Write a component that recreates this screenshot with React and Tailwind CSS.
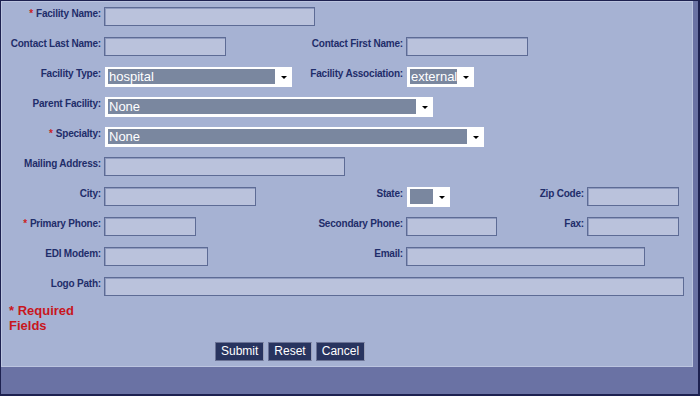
import React from "react";

const Label = ({ children, req }) => (
  <div className="pt-[1px] pr-[3px] text-right text-[10px] leading-[12px] font-bold tracking-[-0.2px] text-[#1f2d6a] whitespace-nowrap">
    {req && <span className="text-[#cc2222] mr-[3px]">*</span>}
    {children}
  </div>
);

const Input = ({ w, span }) => (
  <div className={`${span || ""}`}>
    <div
      className="h-[19px] bg-[#bac2dc] border border-[#5d6b95] shadow-[inset_1px_1px_0_#8f9bbf]"
      style={{ width: w }}
    />
  </div>
);

const Select = ({ w, value, span }) => (
  <div className={`${span || ""}`}>
    <div
      className="ml-[1px] h-[20px] bg-white flex items-stretch pl-[3px] pt-[2px] pb-[3px]"
      style={{ width: w }}
    >
      <div className="flex-1 bg-[#7a879f] text-white text-[13px] leading-[15px] pl-[1px] overflow-hidden whitespace-nowrap">
        {value}
      </div>
      <div className="w-[17px] flex items-center justify-center">
        <div className="w-0 h-0 border-l-[3px] border-r-[3px] border-t-[3px] border-l-transparent border-r-transparent border-t-black mt-[1px]" />
      </div>
    </div>
  </div>
);

const Button = ({ children }) => (
  <button className="h-[19px] px-[5px] bg-[#28345f] text-white text-[12px] leading-[15px] border border-[#6b7396] border-r-[#9aa0b8]">
    {children}
  </button>
);

export default function App() {
  return (
    <div
      className="w-[700px] h-[396px] bg-[#6a72a4] border-t border-l border-r-2 border-b-2 border-[#1d2150] overflow-hidden"
      style={{ fontFamily: '"Liberation Sans", Arial, sans-serif' }}
    >
      <div className="w-[692px] h-[366px] bg-[#a6b2d3] border border-[#bcc5e0] pt-[5px]">
        <div className="grid grid-cols-[102px_196px_106px_124px_57px_1fr] grid-rows-[repeat(9,30px)_26px] items-start">
          <Label req>Facility Name:</Label>
          <Input w={211} span="col-span-5" />

          <Label>Contact Last Name:</Label>
          <Input w={122} />
          <Label>Contact First Name:</Label>
          <Input w={122} span="col-span-3" />

          <Label>Facility Type:</Label>
          <Select w={187} value="hospital" />
          <Label>Facility Association:</Label>
          <Select w={67} value="external" span="col-span-3" />

          <Label>Parent Facility:</Label>
          <Select w={328} value="None" span="col-span-5" />

          <Label req>Specialty:</Label>
          <Select w={379} value="None" span="col-span-5" />

          <Label>Mailing Address:</Label>
          <Input w={241} span="col-span-5" />

          <Label>City:</Label>
          <Input w={152} />
          <Label>State:</Label>
          <Select w={43} value="" />
          <Label>Zip Code:</Label>
          <Input w={92} />

          <Label req>Primary Phone:</Label>
          <Input w={92} />
          <Label>Secondary Phone:</Label>
          <Input w={91} />
          <Label>Fax:</Label>
          <Input w={92} />

          <Label>EDI Modem:</Label>
          <Input w={104} />
          <Label>Email:</Label>
          <Input w={239} span="col-span-3" />

          <Label>Logo Path:</Label>
          <Input w={580} span="col-span-5" />
        </div>

        <div className="pl-[7px] w-[100px] text-[13px] leading-[15px] font-bold text-[#c8161d]">
          * Required Fields
        </div>

        <div className="mt-[9px] ml-[213px] flex gap-[4px]">
          <Button>Submit</Button>
          <Button>Reset</Button>
          <Button>Cancel</Button>
        </div>
      </div>
    </div>
  );
}
